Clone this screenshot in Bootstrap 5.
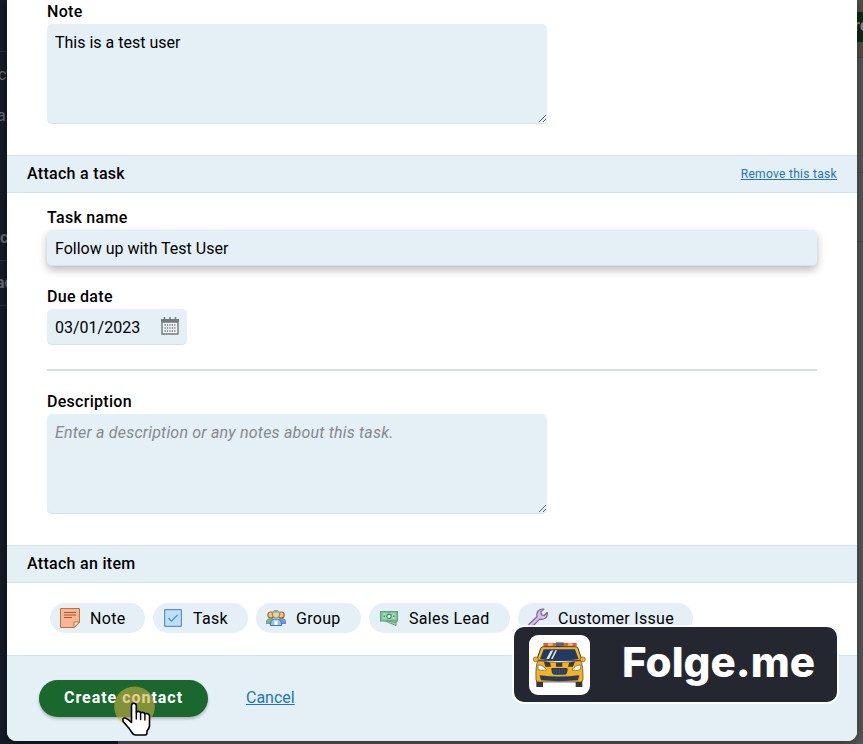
<!DOCTYPE html>
<html lang="en">
<head>
<meta charset="utf-8">
<meta name="viewport" content="width=device-width, initial-scale=1">
<title>Create contact</title>
<link href="https://cdn.jsdelivr.net/npm/bootstrap@5.3.0/dist/css/bootstrap.min.css" rel="stylesheet">
<style>
  :root { --pale: #e4eff6; --edge: #d2e3ee; --blue: #2176b5; }
  body { font-family: Roboto, "Liberation Sans", sans-serif; font-size: 16px; line-height: 24px; color: #000; height: 744px; background: #151c27; }
  .page-right { width: 745px; height: 744px; right: 0; top: 0; background: linear-gradient(#544f46 0 57px, #4b4638 57px 58px, #555 58px); }
  .page-right .backbtn { position: absolute; right: 0; top: 12px; width: 6px; height: 30px; background: #0d2b14; color: #8a8a8a; overflow: hidden; font-weight: 700; line-height: 28px; text-indent: -3px; }
  .page-right .rule { position: absolute; right: 0; width: 8px; height: 1px; background: #435150; }
  .peek { position: absolute; width: 7px; overflow: hidden; left: 0; color: #666a70; white-space: nowrap; }
  .peek-line { position: absolute; left: 0; width: 7px; height: 1px; background: #2b313a; }
  .dialog { margin: 0 6px 0 7px; height: 741px; border-radius: 0 0 9px 9px; overflow: hidden; background: #fff; box-shadow: 0 2px 10px rgba(0,0,0,.42); position: relative; }
  .field-label { font-weight: 500; letter-spacing: .29px; display: block; margin: 0; height: 24px; }
  .field { background: var(--pale); border: 0; border-bottom: 1px solid var(--edge); border-radius: 5px; color: #000; padding: 7px 8px 4px; font-size: 16px; line-height: 24px; }
  .field:focus { background: var(--pale); }
  textarea.field { width: 500px; height: 100px; }
  input.field { height: 36px; margin: 0 0 19px; padding: 6px 8px 5px; }
  textarea.field::placeholder { color: #858a8e; font-style: italic; opacity: 1; letter-spacing: .2px; }
  .lifted { box-shadow: 0 4px 9px rgba(0,0,0,.27); }
  .band { background: var(--pale); border-top: 1px solid var(--edge); border-bottom: 1px solid var(--edge); height: 38px; padding: 0 20px; font-weight: 500; letter-spacing: .3px; }
  .link-b { color: var(--blue); text-decoration: underline; }
  .tiny { font-size: 12px; font-weight: 400; letter-spacing: .3px; }
  .sec-note { height: 155px; padding: 0 40px; }
  .sec-task { height: 352px; padding: 13px 40px 0; }
  .date-box { width: 140px; height: 36px; }
  .divider { height: 2px; background: #dcdfe1; margin: 24px 0 19px; }
  .chips { height: 72px; padding: 20px 43px 0; gap: 8px; }
  .chip { background: var(--pale); border-radius: 15px; height: 30px; padding: 0 0 0 10px; letter-spacing: .3px; gap: 10px; white-space: nowrap; color: #000; border: 0; }
  .chip svg { width: 20px; height: 20px; flex: none; }
  .chip span { padding-top: 1px; }
  .foot { background: var(--pale); border-top: 1px solid var(--edge); height: 86px; padding: 24px 32px 0; }
  .create { width: 169px; height: 37px; border-radius: 19px; background: #1b682f; color: #fff; font-weight: 700; letter-spacing: .97px; border: 0; padding: 0 0 2px; box-shadow: 0 2px 3px rgba(0,0,0,.25); font-size: 16px; }
  .cancel { margin: 6px 0 0 38px; }
  .pointer { left: 114px; top: 686px; width: 41px; height: 58px; overflow: visible; }
  .brand { left: 514px; top: 627px; width: 323px; height: 75px; background: #252730; border-radius: 10px; box-shadow: 0 0 0 2px rgba(255,255,255,.85); padding: 7px 0 0 15px; }
  .brand text { font-family: Inter, "Open Sans", sans-serif; font-weight: 800; font-size: 41px; fill: #fff; }
</style>
<script src="https://cdn.jsdelivr.net/npm/bootstrap@5.3.0/dist/js/bootstrap.bundle.min.js"></script>
</head>
<body class="position-relative overflow-hidden">
<div class="page-right position-absolute">
  <div class="backbtn">re</div>
  <div class="rule" style="top:172px"></div>
  <div class="rule" style="top:241px"></div>
</div>
<div class="position-absolute start-0 top-0">
  <div class="peek-line" style="top:51px"></div>
  <div class="peek" style="top:63px;text-indent:-2px">ct</div>
  <div class="peek" style="top:104px;text-indent:-3px">a</div>
  <div class="peek fw-bold" style="top:226px">c</div>
  <div class="peek-line" style="top:260px"></div>
  <div class="peek fw-bold" style="top:271px;text-indent:-4px">ac</div>
  <div class="peek-line" style="top:305px"></div>
</div>

<main class="dialog d-flex flex-column">
  <section class="sec-note">
    <label class="field-label" for="note">Note</label>
    <textarea id="note" class="form-control field">This is a test user</textarea>
  </section>

  <div class="band d-flex align-items-center justify-content-between">
    <span>Attach a task</span>
    <a href="#" class="link-b tiny">Remove this task</a>
  </div>

  <section class="sec-task">
    <label class="field-label" for="tname">Task name</label>
    <input id="tname" class="form-control field lifted" value="Follow up with Test User">
    <label class="field-label" for="due">Due date</label>
    <div class="field date-box d-flex align-items-center justify-content-between">
      <span id="due">03/01/2023</span>
      <svg width="18" height="18" viewBox="0 0 18 18" class="mb-1"><path d="M0 2h18v3H0z" fill="#747a7f"/><path d="M1 5h16v12H1z" fill="#eef4f8" stroke="#747a7f" stroke-width="1.4"/><path d="M3.5 0v4M14.500 0v4M9 0v3" stroke="#747a7f" stroke-width="1.5"/><path d="M3.500 8h11M3.500 11h11M3.500 14h11" stroke="#747a7f" stroke-width="1.500" stroke-dasharray="1.300 1.100"/></svg>
    </div>
    <div class="divider"></div>
    <label class="field-label" for="desc">Description</label>
    <textarea id="desc" class="form-control field" placeholder="Enter a description or any notes about this task."></textarea>
  </section>

  <div class="band d-flex align-items-center"><span>Attach an item</span></div>

  <div class="chips d-flex align-items-start">
    <button class="chip d-flex align-items-center" style="width:95px">
      <svg viewBox="0 0 20 20"><path d="M.5.5h19v13.500l-5.500 5.500H.5z" fill="#f8b494" stroke="#b8713f"/><path d="M14 19.500V14h5.500z" fill="#fff0dc" stroke="#b8713f"/><path d="M4 4.500h12M4 7h12M4 9.500h8" stroke="#a9572f"/></svg><span>Note</span></button>
    <button class="chip d-flex align-items-center" style="width:95px">
      <svg viewBox="0 0 20 20"><rect x="1.600" y="1.600" width="16.800" height="16.800" rx=".5" fill="#bbdffc" stroke="#5c91cc" stroke-width="1.200"/><path d="M5.500 10l3 3.200L14.500 7" fill="none" stroke="#4787c9" stroke-width="1.100"/></svg><span>Task</span></button>
    <button class="chip d-flex align-items-center" style="width:105px">
      <svg viewBox="0 0 20 20"><path d="M.3 15.500c0-3.500 1.500-5 4.500-5S9 12 9 15.500z" fill="#78b985" stroke="#468a5a" stroke-width=".7"/><path d="M11 15.500c0-3.500 1.500-5 4.500-5s4.200 1.500 4.200 5z" fill="#7a9bdc" stroke="#4468a8" stroke-width=".7"/><circle cx="4.800" cy="7" r="3" fill="#f8c95f" stroke="#a3603c" stroke-width="1.200"/><circle cx="15.200" cy="7" r="3" fill="#f8c95f" stroke="#a3603c" stroke-width="1.200"/><path d="M4.500 17.500c0-4.500 1.500-6.500 5.500-6.500s5.500 2 5.500 6.500z" fill="#8fc4f0" stroke="#386ba0" stroke-width=".9"/><circle cx="10" cy="6.300" r="3.700" fill="#f8d56c" stroke="#79899b" stroke-width="1.200"/><path d="M6.300 5.600C6 1.300 14 1.300 13.700 5.600 11 3.800 9 4.300 6.300 5.600z" fill="#95a9b8"/><path d="M8.500 11.500l1.500 2 1.500-2v5.500h-3z" fill="#fff"/></svg><span>Group</span></button>
    <button class="chip d-flex align-items-center" style="width:141px">
      <svg viewBox="0 0 20 20"><path d="M4 12l13 5.500v-5z" fill="#a5d6b2" stroke="#5ca27c"/><path d="M3 12l14 2.500V10H4z" fill="#b4dfbf" stroke="#5ca27c"/><rect x="1.500" y="3.500" width="17" height="9.500" fill="#80bf95" stroke="#5ca27c"/><rect x="3.500" y="5.300" width="13" height="6" fill="#a9d8b5"/><circle cx="10" cy="8.300" r="2.200" fill="#effff0" stroke="#3b8a66" stroke-width="1.200"/><path d="M4.500 8.300h1.500M14 8.300h1.500" stroke="#3b8a66" stroke-width="1.500"/></svg><span>Sales Lead</span></button>
    <button class="chip d-flex align-items-center" style="width:175px">
      <svg viewBox="0 0 20 20"><path d="M1 16.200 9.200 8.500C7.800 4.500 11 .3 15.800 1.100L12.800 4l.7 2.800 2.800.7 3-3c.8 4.800-3.400 8-7.600 6.600L3.800 19C1.500 19.500.3 18 1 16.200z" fill="#d5c0e9" stroke="#81639c" stroke-width="1.200" stroke-linejoin="round"/></svg><span>Customer Issue</span></button>
  </div>

  <div class="foot d-flex align-items-start">
    <button class="create">Create contact</button>
    <a href="#" class="link-b cancel">Cancel</a>
  </div>
</main>

<div class="brand position-absolute">
  <svg class="d-block" width="308" height="66" viewBox="0 0 308 66">
    <rect x="0" y="1" width="61" height="60" rx="9" fill="#fff"/>
    <svg x="0" y="0" width="61" height="60" viewBox="57 41 183 180">
      <path d="M79 175h20v25H79zM197 175h20v25h-20z" fill="#34373c"/>
      <path d="M100 68h100v9H100z" fill="#f4572f"/><path d="M114 69h14v7h-14zM174 69h14v7h-14z" fill="#ffb171"/><path d="M138 66h23v14h-23z" fill="#5d6470"/>
      <path d="M92 84q2-5 8-5h96q6 0 8 5l12 36H80z" fill="#f7b11c" stroke="#34373c" stroke-width="3"/>
      <path d="M101 87h94l11 29q-58 10-116 0z" fill="#203c66"/>
      <path d="M122 91l8-1-13 26h-8zM136 90h5l-13 26h-5z" fill="#e6edf5"/>
      <rect x="70" y="110" width="15" height="14" rx="6" fill="#f7b11c" stroke="#4b3a25" stroke-width="1.500"/><rect x="211" y="110" width="15" height="14" rx="6" fill="#f7b11c" stroke="#4b3a25" stroke-width="1.500"/>
      <path d="M84 121q64 10 128 0 8 14 7 57l-4 7H82l-4-7q-2-43 6-57z" fill="#f9b019" stroke="#4b3a25" stroke-width="2"/>
      <path d="M102 124l18 2 3 13h-17zM138 127h19v12h-19zM178 126l17-2-6 15h-15z" fill="#383b3e"/>
      <path d="M84 134q17 0 26 15-19 4-26-2zM212 134q-17 0-26 15 19 4 26-2z" fill="#f6fbff" stroke="#526071" stroke-width="2"/>
      <path d="M126 143h45q4 2 0 14-2 6-7 6h-31q-5 0-7-6-4-12 0-14z" fill="#233c61"/>
      <path d="M132 146v14M140 146v14M148 146v14M156 146v14M164 146v14" stroke="#61728a" stroke-width="1.500"/>
      <path d="M89 165q59 7 119 0l-4 15q-56 5-111 0z" fill="#233c61"/>
    </svg>
    <text x="93" y="43" textLength="193" lengthAdjust="spacingAndGlyphs">Folge.me</text>
  </svg>
</div>

<svg class="pointer position-absolute" viewBox="0 0 41 58">
  <circle cx="20.500" cy="20.700" r="20.300" fill="#cfaf3e" fill-opacity=".58"/>
  <path d="M17.500 33V19.500q0-2.300 2.300-2.300t2.500 2.300V26q3-1.500 4.300.7 3-1 4.300 1 3.700-1 4.600 2V40q-.5 3-2.500 5v1.500q0 2.500-2 2.500H21.500q-2.300 0-3.800-2.800l-3-4.300-5.500-6.500q-1.200-3.700 2-3.400 3 1 6.300 4.500z" fill="#fff" stroke="#000" stroke-width="1.600" stroke-linejoin="round"/>
  <path d="M22.300 26v7M26.600 27v6.500M30.900 28v6" stroke="#000" stroke-width="1.400" stroke-linecap="round"/>
</svg>
</body>
</html>
